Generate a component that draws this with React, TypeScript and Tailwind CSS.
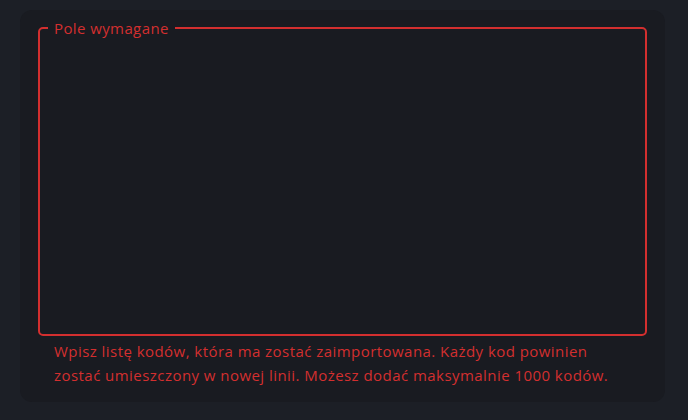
import React from "react";

const App: React.FC = () => {
  return (
    <div
      className="min-h-[420px] bg-[#1c1f26] pt-[10px] pl-[20px]"
      style={{ fontFamily: '"Open Sans", "Liberation Sans", sans-serif' }}
    >
      <div className="w-[645px] h-[392px] bg-[#191b21] rounded-[12px] px-[18px] pt-[18px]">
        {/* Pole tekstowe */}
        <fieldset className="h-[318px] border-2 border-[#d32f2f] rounded-[5px] px-[8px] -mt-[10px]">
          <legend className="px-[6px] text-[15px] leading-[20px] text-[#d32f2f] tracking-[0.4px]">
            Pole wymagane
          </legend>
          <textarea className="w-full h-full bg-transparent outline-none resize-none text-white" />
        </fieldset>

        {/* Podpowiedź */}
        <p className="mt-[3px] pl-[16px] pr-[10px] text-[15px] leading-[24px] text-[#d32f2f] tracking-[0.45px]">
          Wpisz listę kodów, która ma zostać zaimportowana. Każdy kod powinien
          <br />
          zostać umieszczony w nowej linii. Możesz dodać maksymalnie 1000 kodów.
        </p>
      </div>
    </div>
  );
};

export default App;
